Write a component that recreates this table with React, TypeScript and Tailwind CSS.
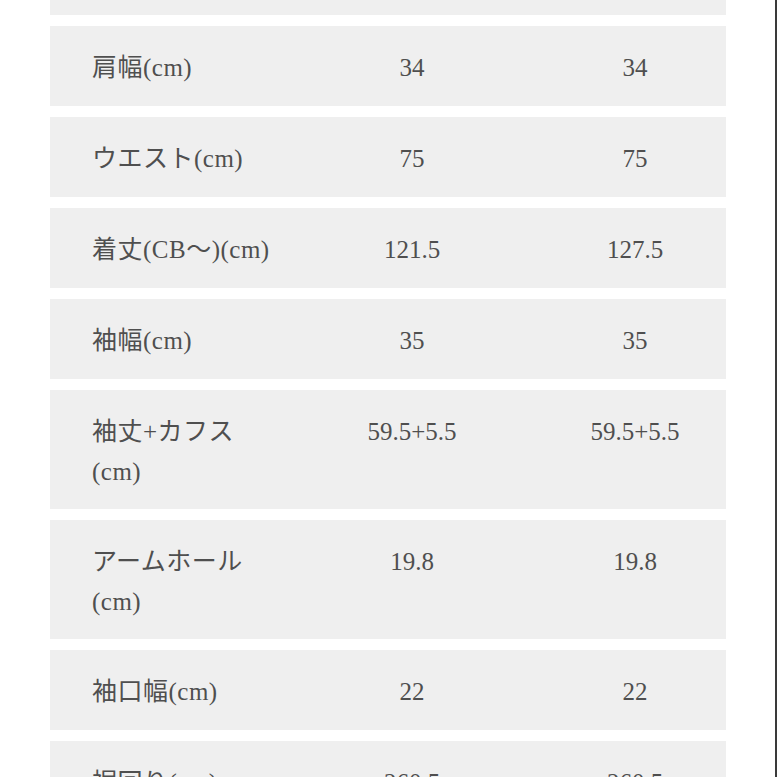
import React from "react";

type Row = {
  label: string[];
  a: string;
  b: string;
};

const rows: Row[] = [
  { label: ["肩幅(cm)"], a: "34", b: "34" },
  { label: ["ウエスト(cm)"], a: "75", b: "75" },
  { label: ["着丈(CB〜)(cm)"], a: "121.5", b: "127.5" },
  { label: ["袖幅(cm)"], a: "35", b: "35" },
  { label: ["袖丈+カフス", "(cm)"], a: "59.5+5.5", b: "59.5+5.5" },
  { label: ["アームホール", "(cm)"], a: "19.8", b: "19.8" },
  { label: ["袖口幅(cm)"], a: "22", b: "22" },
  { label: ["裾回り(cm)"], a: "260.5", b: "260.5" },
];

function SizeRow({ row }: { row: Row }) {
  const tall = row.label.length > 1;
  return (
    <div
      className={
        tall
          ? "flex h-[119px] shrink-0 items-start bg-[#efefef] pl-[42px] pt-[22px]"
          : "flex h-[80px] shrink-0 items-start bg-[#efefef] pl-[42px] pt-[22px]"
      }
    >
      <div className="w-[250px] tracking-[0.5px]">
        {row.label.map((line) => (
          <div key={line}>{line}</div>
        ))}
      </div>
      <div className="w-[140px] text-center">{row.a}</div>
      <div className="ml-[83px] w-[140px] text-center">{row.b}</div>
    </div>
  );
}

export default function App() {
  return (
    <div className="flex h-[777px] w-[777px] overflow-hidden bg-white">
      <div
        className="flex-1 overflow-hidden pl-[50px] pr-[49px] text-[25px] leading-[40px] text-[#4f4f4f]"
        style={{ fontFamily: '"Liberation Serif", "Noto Sans CJK JP", serif' }}
      >
        <div className="flex flex-col gap-[11px]">
          {/* previous row, scrolled out of view */}
          <div className="h-[15px] shrink-0 bg-[#efefef]" />
          {rows.map((row) => (
            <SizeRow key={row.label.join("")} row={row} />
          ))}
        </div>
      </div>
      <div className="w-[2px] bg-[#3a3a3a]" />
    </div>
  );
}
